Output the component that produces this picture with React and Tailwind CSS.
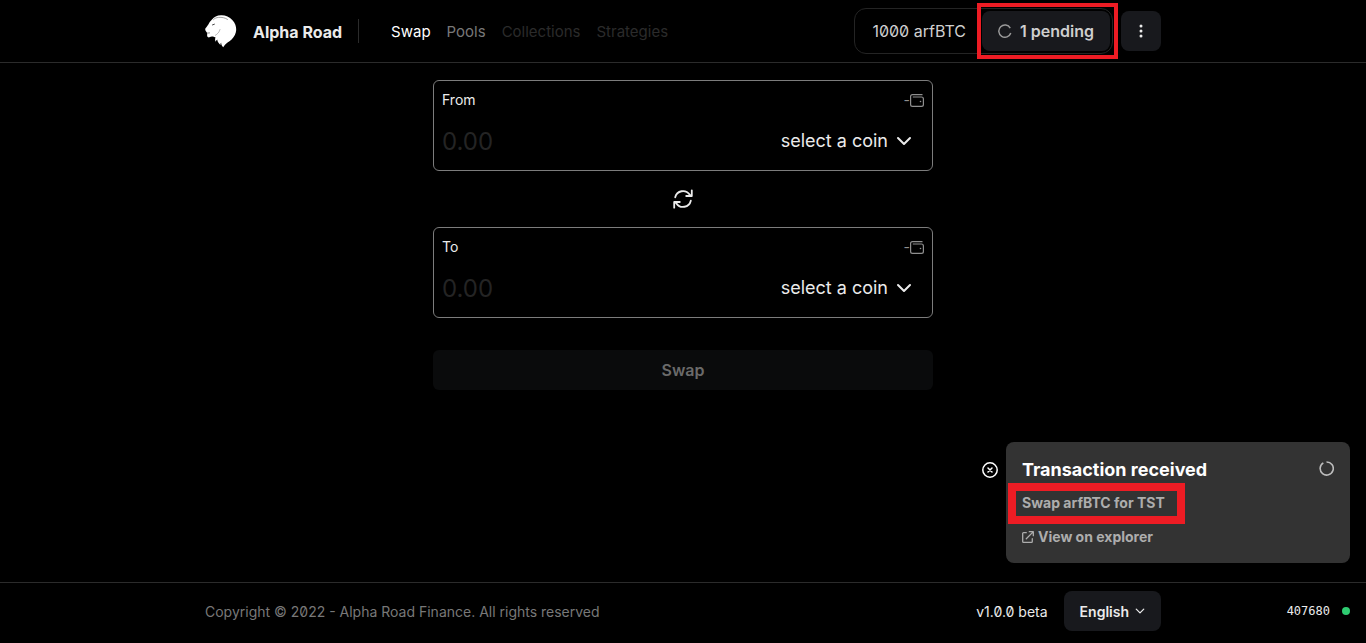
import React from "react";

function Spinner({ className }) {
  return (
    <svg viewBox="0 0 16 16" className={className} fill="none" stroke="currentColor" strokeWidth="1.7" aria-hidden="true">
      <path d="M4.600 2A7 7 0 1 0 8 1" />
    </svg>
  );
}

function PendingSpinner({ className }) {
  return (
    <svg viewBox="0 0 16 16" className={className} fill="none" stroke="currentColor" strokeWidth="1.7" aria-hidden="true">
      <path d="M14 4.600A7 7 0 1 0 14.600 10.300" />
    </svg>
  );
}

function Lion() {
  return (
    <svg viewBox="0 0 32 33" className="h-[33px] w-8" aria-hidden="true">
      <path
        fill="#fff"
        d="M7 4.500C9 2 12 .3 16 .3c4.200-.2 8.500 1.500 11.300 4.600 2.800 2.800 4.100 6.400 3.900 10.200-.2 3.500-1.800 6.600-4.600 9.300-2.600 2.300-6.300 4-8.400 7.900-1.300-1.200-2-2.600-2.100-4.700-.5.700-.7 1.400-.6 2.300-1.800-1.200-2.900-3-3.300-5.300-.7.500-1.300 1.200-1.600 2.100-.7-1.600-.6-3.200-.1-4.500-.9.100-1.700-.2-2.400-.7-1.700.1-2.800.3-4.200 1-.9-.1-1.500-.5-1.700-1.200-.2-.6 0-1.200 0-1.800l-.2-1.800C1 16.500.3 15.400.2 14.200c0-.8.4-1.300 1-1.800L3.500 9.300C4.300 7.500 5.300 6 7 4.500z"
      />
      <g fill="none" strokeLinecap="round">
        <path stroke="#777" strokeWidth=".7" d="M8.500 4.600c1-1.300 3-2 5-2.200 3.300-.3 6.500.3 9 2" />
        <path stroke="#333" strokeWidth=".9" d="M7.500 9.900l1.900-.7" />
        <path stroke="#555" strokeWidth=".7" d="M2.300 18.100l2.200-.2" />
        <path stroke="#777" strokeWidth=".5" d="M15 14.500c-.7 2.700-2.400 4.500-4.600 5.800" />
      </g>
    </svg>
  );
}

function Wallet() {
  return (
    <svg viewBox="0 0 14 13" className="h-[13px] w-[14px]" fill="none" stroke="currentColor" strokeWidth="1.200" aria-hidden="true">
      <path d="M12.500.6h-10a1.900 1.900 0 0 0-1.900 1.900v8a1.900 1.900 0 0 0 1.900 1.900h9a1.900 1.900 0 0 0 1.900-1.900v-5.600a1.900 1.900 0 0 0-1.900-1.900H2.800" />
      <circle cx="10.500" cy="7.500" r=".8" fill="currentColor" stroke="none" />
    </svg>
  );
}

function Chevron({ className }) {
  return (
    <svg viewBox="0 0 16 16" className={className} fill="none" stroke="currentColor" strokeWidth="2" strokeLinecap="round" strokeLinejoin="round" aria-hidden="true">
      <path d="M2 5l6 6 6-6" />
    </svg>
  );
}

function CoinBox({ label, id }) {
  return (
    <div className="rounded-md border border-[#7c7c7c] px-2 pt-[7px] pb-[5px]">
      <div className="flex h-6 items-center justify-between">
        <label htmlFor={id} className="text-sm text-[#ebebeb]">{label}</label>
        <div className="flex items-center text-sm text-[#8f8f8f]">
          <span>-</span>
          <Wallet />
        </div>
      </div>
      <div className="mt-[5px] flex h-12 items-center justify-between">
        <input
          id={id}
          placeholder="0.00"
          inputMode="decimal"
          className="h-12 w-0 grow bg-transparent text-2xl font-normal text-white outline-none [font-feature-settings:normal] placeholder:text-[#242424]"
        />
        <button type="button" className="flex h-12 items-center gap-2 pr-3 text-lg text-[#ebebeb]">
          select a coin
          <Chevron className="h-4 w-4" />
        </button>
      </div>
    </div>
  );
}

export default function App() {
  return (
    <div className="flex min-h-screen flex-col bg-black font-['Inter',sans-serif] text-[#ebebeb] [font-feature-settings:'zero']">
      <header className="border-b border-[#2b2b2b]">
        <div className="mx-auto flex h-[62px] w-full max-w-[956px] items-center">
          <a href="#home" className="flex items-center gap-4 font-bold">
            <Lion />
            <span className="pt-0.5">Alpha Road</span>
          </a>
          <div className="ml-4 h-6 w-px bg-[#2b2b2b]" />
          <nav className="ml-8 flex gap-4 pt-0.5 text-[15px]">
            <a href="#swap" className="text-white">Swap</a>
            <a href="#pools" className="text-[#787878]">Pools</a>
            <a href="#collections" className="text-[#2b2b2b]">Collections</a>
            <a href="#strategies" className="text-[#2b2b2b]">Strategies</a>
          </nav>
          <div className="ml-auto flex items-center gap-2">
            <div className="flex h-[46px] items-center rounded-xl border border-[#242424] pr-[2px] pl-[17px] text-[#cfcfcf]">
              <span>1000 arfBTC</span>
              <div className="relative ml-4">
                <button type="button" className="flex h-10 items-center gap-2 rounded-lg bg-[#18191d] px-4 font-semibold">
                  <PendingSpinner className="h-[14px] w-[14px] text-[#9a9a9a]" />
                  1 pending
                </button>
                <div className="pointer-events-none absolute -inset-y-2 -right-2 -left-[5px] border-4 border-[#ed1c24]" />
              </div>
            </div>
            <button type="button" aria-label="More" className="flex h-10 w-10 items-center justify-center rounded-lg bg-[#18191d]">
              <svg viewBox="0 0 16 16" className="h-4 w-4" fill="#ebebeb" aria-hidden="true">
                <circle cx="8" cy="3" r="1.500" />
                <circle cx="8" cy="8" r="1.500" />
                <circle cx="8" cy="13" r="1.500" />
              </svg>
            </button>
          </div>
        </div>
      </header>

      <main className="mx-auto w-full max-w-[500px] grow pt-[17px]">
        <CoinBox label="From" id="from-amount" />
        <div className="flex h-14 items-center justify-center">
          <button type="button" aria-label="Switch coins">
            <svg viewBox="0 0 20 20" className="h-5 w-5" fill="none" stroke="#ebebeb" strokeWidth="1.800" strokeLinecap="round" strokeLinejoin="round" aria-hidden="true">
              <path d="M18.800 1.300V7h-5.600M2.200 8.300A8 8 0 0 1 16.600 5.600L18.400 7" />
              <path d="M1.200 18.700V13h5.600M17.800 11.700A8 8 0 0 1 3.400 14.400L1.600 13" />
            </svg>
          </button>
        </div>
        <CoinBox label="To" id="to-amount" />
        <button type="button" className="mt-8 h-10 w-full rounded-md bg-[#0a0b0c] font-semibold text-[#6a6a6a]">
          Swap
        </button>
      </main>

      <footer className="relative border-t border-[#2b2b2b]">
        <div className="mx-auto mb-1 flex h-14 w-full max-w-[956px] items-center text-sm">
          <p className="pt-0.5 text-[#787878]">Copyright © 2022 - Alpha Road Finance. All rights reserved</p>
          <span className="mr-4 ml-auto pt-0.5">v1.0.0 beta</span>
          <button type="button" className="flex h-10 items-center gap-1.5 rounded-lg bg-[#18191d] px-4 font-semibold">
            <span className="pt-0.5">English</span>
            <Chevron className="h-[10px] w-[10px]" />
          </button>
        </div>
        <div className="absolute top-5 right-4 flex items-center gap-3 font-['DejaVu_Sans_Mono',monospace] text-xs">
          407680
          <span className="h-2 w-2 rounded-full bg-[#2ecc71]" />
        </div>
      </footer>

      <aside className="fixed right-4 bottom-20 flex items-start gap-2">
        <button type="button" aria-label="Dismiss" className="mt-5 text-white">
          <svg viewBox="0 0 16 16" className="h-4 w-4" fill="none" stroke="currentColor" strokeWidth="1.500" strokeLinecap="round" aria-hidden="true">
            <circle cx="8" cy="8" r="7.200" />
            <path d="M6 6l4 4M10 6l-4 4" />
          </svg>
        </button>
        <div className="w-[344px] rounded-lg bg-[#333] px-4 pt-[17px] pb-4 font-bold">
          <div className="flex items-start justify-between">
            <h2 className="text-lg leading-[22px] text-white">Transaction received</h2>
            <Spinner className="mt-0.5 h-[15px] w-[15px] text-[#bdbdbd]" />
          </div>
          <div className="relative mt-3 w-fit text-sm text-[#adadad]">
            Swap arfBTC for TST
            <div className="pointer-events-none absolute -top-[10px] -right-5 -bottom-[11px] -left-[14px] border-8 border-[#ed1c24]" />
          </div>
          <a href="#explorer" className="mt-[14px] flex items-center gap-1 text-sm text-[#adadad]">
            <svg viewBox="0 0 14 14" className="h-3 w-3" fill="none" stroke="currentColor" strokeWidth="1.500" strokeLinecap="round" strokeLinejoin="round" aria-hidden="true">
              <path d="M5 2H1.800a1 1 0 0 0-1 1v9.200a1 1 0 0 0 1 1H11a1 1 0 0 0 1-1V9M8.500.8h4.700v4.700M13 1L5 9" />
            </svg>
            View on explorer
          </a>
        </div>
      </aside>
    </div>
  );
}
